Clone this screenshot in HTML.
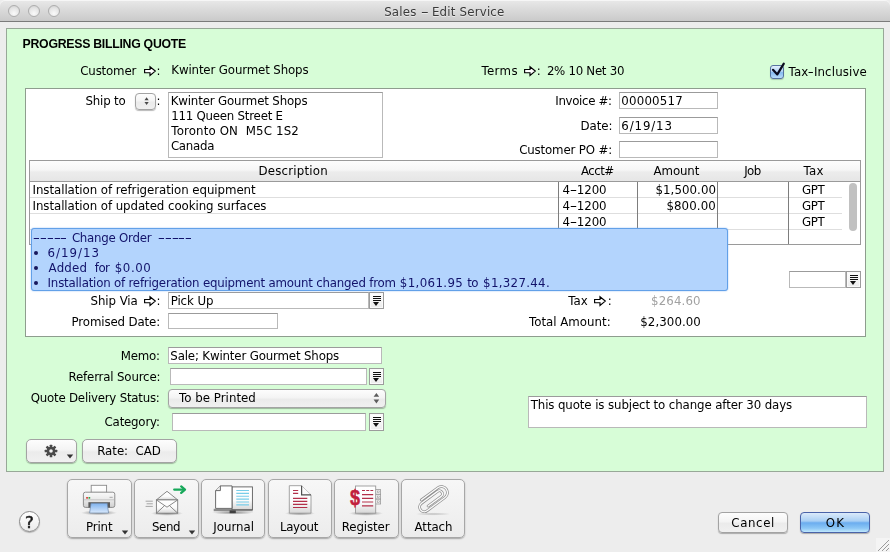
<!DOCTYPE html>
<html><head><meta charset="utf-8"><title>Sales - Edit Service</title>
<style>
*{box-sizing:border-box;margin:0;padding:0}
html,body{width:890px;height:552px;overflow:hidden}
body{background:#ededed;font-family:"DejaVu Sans","Liberation Sans",sans-serif;font-size:11.8px;color:#000;position:relative}
.abs,.t,.f,.btn,.tb,svg{position:absolute}
.t{white-space:pre;line-height:16px;height:16px}
.f{background:#fff;border:1px solid #b9b9b9;border-top-color:#9b9b9b}
#titlebar{left:0;top:0;width:890px;height:22px;background:linear-gradient(#e9e9e9,#dcdcdc 40%,#cacaca);border-bottom:1px solid #7b7b7b;border-radius:5px 5px 0 0;box-shadow:inset 0 1px 0 #f6f6f6}
.light{position:absolute;top:5px;width:12px;height:12px;border-radius:50%;background:radial-gradient(circle at 50% 75%,#fafafa,#e6e6e6 55%,#cdcdcd);border:1px solid #adadad}
#green{left:6px;top:28px;width:878px;height:444px;background:#d7fdd7;border:1px solid #98a898}
#white{left:25px;top:88px;width:841px;height:249px;background:#fff;border:1px solid #8e9d8e}
.btn{background:linear-gradient(#fdfdfd,#f4f4f4 45%,#ebebeb 55%,#f0f0f0);border:1px solid #a3a3a3;border-radius:5px;box-shadow:0 1px 1px rgba(0,0,0,.28)}
.tb{background:linear-gradient(#f7f7f7,#ececec);border:1px solid #a7a7a7;border-radius:5px;box-shadow:0 1px 1.5px rgba(0,0,0,.3);height:59px;top:479px}
.combo{position:absolute;width:15px;height:17px;border:1px solid #9c9c9c;background:linear-gradient(#ffffff,#ececec);box-shadow:inset 0 0 0 1px #fafafa}
.combo i{position:absolute;left:2.5px;width:8px;height:1px;background:#111}
.combo b{position:absolute;left:3px;top:9px;width:0;height:0;border-left:3.5px solid transparent;border-right:3.5px solid transparent;border-top:4px solid #111}
.gl{position:absolute;background:#dedede;height:1px}
.vl{position:absolute;background:#7d7d7d;width:1px}
</style></head><body>
<div id="titlebar" class="abs">
  <div class="light" style="left:8px"></div><div class="light" style="left:28px"></div><div class="light" style="left:48px"></div>
</div>
<div id="green" class="abs"></div>
<div id="white" class="abs"></div>

<!-- link arrows -->
<svg style="left:143px;top:64.5px" width="14" height="12" viewBox="0 0 14 12"><path d="M1.6 4.5H7V1.7L12.3 6.1 7 10.5V7.7H1.6z" fill="#fff" stroke="#000" stroke-width="1.15" stroke-linejoin="miter"/></svg>
<svg style="left:522.6px;top:64.5px" width="14" height="12" viewBox="0 0 14 12"><path d="M1.6 4.5H7V1.7L12.3 6.1 7 10.5V7.7H1.6z" fill="#fff" stroke="#000" stroke-width="1.15" stroke-linejoin="miter"/></svg>
<svg style="left:143px;top:294.5px" width="14" height="12" viewBox="0 0 14 12"><path d="M1.6 4.5H7V1.7L12.3 6.1 7 10.5V7.7H1.6z" fill="#fff" stroke="#000" stroke-width="1.15" stroke-linejoin="miter"/></svg>
<svg style="left:593.2px;top:294.5px" width="14" height="12" viewBox="0 0 14 12"><path d="M1.6 4.5H7V1.7L12.3 6.1 7 10.5V7.7H1.6z" fill="#fff" stroke="#000" stroke-width="1.15" stroke-linejoin="miter"/></svg>

<!-- checkbox -->
<div class="abs" style="left:770px;top:65px;width:14px;height:14px;border:1px solid #56739f;border-radius:3px;background:linear-gradient(#e3f0fc,#b5d5f6 45%,#86bbf0 55%,#b9dcfa);box-shadow:0 1px 1px rgba(0,0,0,.2)"></div>
<svg style="left:769px;top:60px" width="18" height="20" viewBox="0 0 18 20"><path d="M4 9.8l4.3 4.6L14.8 3.6" fill="none" stroke="#0b0b1e" stroke-width="2.2" stroke-linecap="round" stroke-linejoin="round"/></svg>

<!-- ship to -->
<div class="btn" style="left:134.5px;top:92.5px;width:21px;height:17px;border-radius:4px"></div>
<svg style="left:134px;top:93px" width="22" height="17" viewBox="0 0 22 17"><path d="M10.5 7.2l2.1-2.9 2.1 2.9zM10.5 9l2.1 2.9 2.1-2.9z" fill="#4a4a4a"/></svg>
<div class="f" style="left:168px;top:92px;width:215px;height:66px"></div>
<div class="f" style="left:619px;top:92px;width:99px;height:17px"></div>
<div class="f" style="left:619px;top:117px;width:99px;height:17px"></div>
<div class="f" style="left:619px;top:141px;width:99px;height:17px"></div>

<!-- table -->
<div class="abs" style="left:29px;top:160px;width:832px;height:85px;border:1px solid #9a9a9a;background:#fff"></div>
<div class="abs" style="left:30px;top:161px;width:830px;height:21px;background:linear-gradient(#fdfdfd,#f6f6f6 45%,#ececec 55%,#e6e6e6);border-bottom:1px solid #9a9a9a"></div>
<div class="gl" style="left:30px;top:197px;width:812px"></div>
<div class="gl" style="left:30px;top:213px;width:812px"></div>
<div class="gl" style="left:30px;top:229px;width:812px"></div>
<div class="vl" style="left:558px;top:182px;height:62px"></div>
<div class="vl" style="left:637px;top:182px;height:62px"></div>
<div class="vl" style="left:717px;top:182px;height:62px"></div>
<div class="vl" style="left:788px;top:182px;height:62px"></div>
<div class="abs" style="left:849px;top:183px;width:8px;height:48px;border-radius:4px;background:#c1c1c1"></div>

<div class="f" style="left:789px;top:271px;width:57px;height:17px"></div>
<div class="combo" style="left:846px;top:271px"><i style="top:3px"></i><i style="top:5px"></i><i style="top:7px"></i><b></b></div>

<div class="f" style="left:168px;top:292px;width:201px;height:17px"></div>
<div class="combo" style="left:369px;top:292px"><i style="top:3px"></i><i style="top:5px"></i><i style="top:7px"></i><b></b></div>
<div class="f" style="left:168px;top:313px;width:110px;height:16px"></div>

<!-- change-order popup -->
<div class="abs" style="left:31px;top:228px;width:697px;height:63px;background:#b3d4fd;border:1.5px solid #62a0e8;border-radius:3px;box-shadow:0 0 1.5px #7aaeee"></div>
<div class="abs" style="left:34px;top:251px;width:4px;height:4px;border-radius:50%;background:#17175c"></div>
<div class="abs" style="left:34px;top:266px;width:4px;height:4px;border-radius:50%;background:#17175c"></div>
<div class="abs" style="left:34px;top:281px;width:4px;height:4px;border-radius:50%;background:#17175c"></div>

<!-- lower form -->
<div class="f" style="left:168px;top:347px;width:214px;height:17px"></div>
<div class="f" style="left:170px;top:368px;width:197px;height:17px"></div>
<div class="combo" style="left:369px;top:368px"><i style="top:3px"></i><i style="top:5px"></i><i style="top:7px"></i><b></b></div>
<div class="btn" style="left:168px;top:389px;width:218px;height:19px;border-radius:4px"></div>
<svg style="left:371px;top:391px" width="12" height="14" viewBox="0 0 12 14"><path d="M2.6 5.8L5.4 2l2.8 3.8zM2.6 8.6L5.4 12.4l2.8-3.8z" fill="#5c5c5c"/></svg>
<div class="f" style="left:172px;top:413px;width:194px;height:18px"></div>
<div class="combo" style="left:369px;top:413px;height:18px"><i style="top:3px"></i><i style="top:5px"></i><i style="top:7px"></i><b></b></div>
<div class="f" style="left:528px;top:396px;width:339px;height:32px"></div>

<!-- gear + rate -->
<div class="btn" style="left:26px;top:439px;width:51px;height:24px"></div>
<svg style="left:44px;top:444px" width="14" height="14" viewBox="-7 -7 14 14"><g fill="#4a4a4a"><circle r="4.3"/><g id="teeth"><rect x="-1.3" y="-6.3" width="2.6" height="12.6" rx=".5"/><rect x="-1.3" y="-6.3" width="2.6" height="12.6" rx=".5" transform="rotate(45)"/><rect x="-1.3" y="-6.3" width="2.6" height="12.6" rx=".5" transform="rotate(90)"/><rect x="-1.3" y="-6.3" width="2.6" height="12.6" rx=".5" transform="rotate(135)"/></g></g><circle r="1.8" fill="#f3f3f3"/></svg>
<svg style="left:65.6px;top:454px" width="8" height="5" viewBox="0 0 8 5"><path d="M.8.5h6.4L4 4.4z" fill="#333"/></svg>
<div class="btn" style="left:82px;top:439px;width:95px;height:24px"></div>

<!-- toolbar -->
<div class="tb" style="left:67px;width:65px"></div>
<div class="tb" style="left:134px;width:65px"></div>
<div class="tb" style="left:201px;width:64px"></div>
<div class="tb" style="left:268px;width:64px"></div>
<div class="tb" style="left:334px;width:65px"></div>
<div class="tb" style="left:401px;width:64px"></div>
<svg style="left:121px;top:530px" width="8" height="5" viewBox="0 0 8 5"><path d="M.8.5h6.4L4 4.4z" fill="#333"/></svg>
<svg style="left:188px;top:530px" width="8" height="5" viewBox="0 0 8 5"><path d="M.8.5h6.4L4 4.4z" fill="#333"/></svg>
<svg style="left:0;top:0" width="890" height="552" viewBox="0 0 890 552">
<defs>
<linearGradient id="gPaper" x1="0" y1="0" x2="0" y2="1"><stop offset="0" stop-color="#ffffff"/><stop offset=".6" stop-color="#fbfbfb"/><stop offset="1" stop-color="#d6d6d6"/></linearGradient>
<linearGradient id="gBody" x1="0" y1="0" x2="0" y2="1"><stop offset="0" stop-color="#fafafa"/><stop offset=".5" stop-color="#e9e9e9"/><stop offset="1" stop-color="#cfcfcf"/></linearGradient>
<linearGradient id="gBlue" x1="0" y1="0" x2="0" y2="1"><stop offset="0" stop-color="#7fb2ee"/><stop offset="1" stop-color="#d9e9fc"/></linearGradient>
<radialGradient id="gSh"><stop offset="0" stop-color="#000" stop-opacity=".42"/><stop offset=".6" stop-color="#000" stop-opacity=".18"/><stop offset="1" stop-color="#000" stop-opacity="0"/></radialGradient>
</defs>
<!-- printer -->
<ellipse cx="99" cy="512.8" rx="18" ry="2.6" fill="url(#gSh)"/>
<rect x="91.2" y="485.3" width="15.4" height="9" fill="url(#gPaper)" stroke="#8a8a8a" stroke-width=".9"/>
<rect x="83.4" y="492.2" width="31.4" height="15.2" rx="2" fill="url(#gBody)" stroke="#828282" stroke-width=".9"/>
<path d="M84 499.8H114.2" stroke="#bcbcbc" stroke-width=".8"/>
<rect x="86.2" y="497" width="1.7" height="1.7" fill="#d9392f"/><rect x="88.5" y="497" width="1.7" height="1.7" fill="#35a845"/>
<rect x="109.5" y="496.8" width="3.2" height="1.2" fill="#b5b5b5"/>
<rect x="88.4" y="502.2" width="21.6" height="5.4" fill="#5b5b5b"/>
<path d="M91 503.3H107.2L108.6 513H89.6z" fill="url(#gBlue)" stroke="#6f86a6" stroke-width=".7"/>
<!-- envelope -->
<ellipse cx="167" cy="513.4" rx="16" ry="2.4" fill="url(#gSh)"/>
<path d="M145.6 501.2H152.8M146.6 503.8H152.8M145.6 506.4H152.8" stroke="#9c9c9c" stroke-width=".9"/>
<path d="M156.4 499.9L167 491.3 177.7 499.9z" fill="url(#gPaper)" stroke="#7c7c7c" stroke-width=".9" stroke-linejoin="round"/>
<rect x="156.4" y="499.9" width="21.3" height="13.3" fill="url(#gPaper)" stroke="#7c7c7c" stroke-width=".9"/>
<path d="M156.4 499.9L167 507.2 177.7 499.9M156.4 513.2L164.6 505.6M177.7 513.2L169.4 505.6" fill="none" stroke="#7c7c7c" stroke-width=".9"/>
<path d="M174.2 489.6H184" stroke="#17a85a" stroke-width="2.3" stroke-linecap="round"/>
<path d="M181.2 486.4L185 489.6 181.2 492.9" fill="none" stroke="#17a85a" stroke-width="2.3" stroke-linecap="round" stroke-linejoin="round"/>
<!-- journal -->
<ellipse cx="233" cy="512.6" rx="21" ry="2" fill="url(#gSh)"/>
<rect x="213.7" y="508.8" width="38.9" height="2.4" fill="#8c8c8c"/>
<rect x="229.6" y="510.4" width="6.2" height="2.8" fill="#3f3f3f"/>
<rect x="232" y="486.9" width="20.4" height="22.8" fill="url(#gPaper)" stroke="#5c5c5c" stroke-width=".9"/>
<path d="M215.6 490.6L220.4 485.9H232V508.4H215.6z" fill="#fff" stroke="#5c5c5c" stroke-width=".9" stroke-linejoin="round"/>
<path d="M215.6 490.6H220.4V485.9" fill="#ececec" stroke="#5c5c5c" stroke-width=".9" stroke-linejoin="round"/>
<path d="M236.3 490.5H249M236.3 493.4H249M236.3 496.2H249M236.3 499.1H249M236.3 502H249M236.3 504.9H249" stroke="#78cde9" stroke-width="1.1"/>
<!-- layout -->
<ellipse cx="300" cy="513.4" rx="15" ry="2.2" fill="url(#gSh)"/>
<path d="M289.3 485.7H301.6L311 494.9V513.2H289.3z" fill="url(#gPaper)" stroke="#9a9a9a" stroke-width=".9" stroke-linejoin="round"/>
<path d="M301.6 485.7V494.9H311" fill="#fafafa" stroke="#505050" stroke-width="1.2"/>
<path d="M293 490.5H298.2M293 493.4H298.2M293 498.3H307.3M293 501.4H307.3M293 504.4H307.3M293 507.5H307.3" stroke="#b3304a" stroke-width="1.2"/>
<!-- register -->
<ellipse cx="366" cy="513.4" rx="17" ry="2.4" fill="url(#gSh)"/>
<g fill="#f3f3f3" stroke="#9a9a9a" stroke-width=".8"><rect x="375.2" y="489.6" width="5.4" height="4.6"/><rect x="375.2" y="494.4" width="5.4" height="4.6"/><rect x="375.2" y="499.2" width="5.4" height="4.8"/></g>
<g fill="#fff" stroke="#8a8a8a" stroke-width=".5"><rect x="377.6" y="491" width="1.6" height="1.6"/><rect x="377.6" y="496" width="1.6" height="1.6"/><rect x="377.6" y="500.9" width="1.6" height="1.6"/></g>
<rect x="355.5" y="486" width="20.2" height="27.2" fill="url(#gPaper)" stroke="#9a9a9a" stroke-width=".9"/>
<path d="M362 490.5H373.2" stroke="#b3304a" stroke-width="1.2" stroke-dasharray="3 1.2"/>
<path d="M362 494.6H373.2M362 498.3H373.2M362 502H373.2M362 505.8H373.2" stroke="#b3304a" stroke-width="1.2"/>
<text x="0" y="0" transform="translate(349.9,505) scale(.84,1)" font-family="Liberation Sans, DejaVu Sans, sans-serif" font-weight="bold" font-size="21.5" fill="#c21f3d" stroke="#c21f3d" stroke-width=".5">$</text>
<!-- paperclip -->
<ellipse cx="433" cy="514" rx="18" ry="1.6" fill="url(#gSh)" opacity=".5"/>
<g transform="translate(432.8,499) rotate(-36.5) scale(.93) translate(-19.5,-6.5)" fill="none" stroke-linecap="round" stroke-linejoin="round">
<path id="clip" d="M11 9.6H28.5A3.3 3.3 0 0 0 28.5 3H7A5 5 0 0 0 7 13H31A6.5 6.5 0 0 0 31 0H9" stroke="#8e8e8e" stroke-width="3"/>
<path d="M11 9.6H28.5A3.3 3.3 0 0 0 28.5 3H7A5 5 0 0 0 7 13H31A6.5 6.5 0 0 0 31 0H9" stroke="#fbfbfb" stroke-width="1.5"/>
</g>
</svg>


<!-- help -->
<div class="abs" style="left:19px;top:511px;width:21px;height:21px;border-radius:50%;border:1px solid #8a8a8a;background:linear-gradient(#ffffff,#ebebeb);box-shadow:0 1px 1px rgba(0,0,0,.25)"></div>

<!-- cancel / ok -->
<div class="btn" style="left:718px;top:512px;width:70px;height:21px;border-radius:4px"></div>
<div class="btn" style="left:800px;top:512px;width:70px;height:21px;border-radius:4px;border-color:#4a63a8;background:linear-gradient(#dbeafa,#a9cff4 42%,#6badef 52%,#8cc7f6 80%,#c0e7fc)"></div>
<!-- resize grip -->
<svg style="left:876px;top:538px" width="14" height="14" viewBox="0 0 14 14"><rect width="14" height="14" fill="#f4f4f4"/><path d="M13 2L2 13M13 6L6 13M13 10l-3 3" stroke="#9a9a9a" stroke-width="1"/></svg>

<div class="abs" style="left:0;top:0;width:890px;height:552px;will-change:transform">
<div class="t" style="left:384.20px;top:4.00px;letter-spacing:0.194px;color:#3a3a3a;text-shadow:0 1px 0 rgba(255,255,255,.55)">Sales <span style="display:inline-block;width:7.5px;text-align:center;letter-spacing:0;transform:scaleX(1.9)">-</span> Edit Service</div>
<div class="t" style="left:22.60px;top:36.00px;letter-spacing:-0.276px;font-weight:bold;font-size:12.3px;font-family:'Liberation Sans',sans-serif">PROGRESS BILLING QUOTE</div>
<div class="t" style="left:80.30px;top:63.00px;letter-spacing:-0.186px">Customer</div>
<div class="t" style="left:156.60px;top:63.00px">:</div>
<div class="t" style="left:171.30px;top:62.00px;letter-spacing:-0.140px">Kwinter Gourmet Shops</div>
<div class="t" style="left:481.50px;top:63.00px;letter-spacing:0.325px">Terms</div>
<div class="t" style="left:536.80px;top:63.00px">:</div>
<div class="t" style="left:546.90px;top:63.00px;letter-spacing:-0.291px">2% 10 Net 30</div>
<div class="t" style="left:788.50px;top:64.20px;letter-spacing:0.136px">Tax<span style="display:inline-block;width:5.5px;text-align:center;letter-spacing:0;transform:scaleX(1.4)">-</span>Inclusive</div>
<div class="t" style="left:85.40px;top:93.00px;letter-spacing:-0.150px">Ship to</div>
<div class="t" style="left:156.60px;top:93.00px">:</div>
<div class="t" style="left:170.70px;top:93.00px;letter-spacing:-0.160px">Kwinter Gourmet Shops</div>
<div class="t" style="left:171.20px;top:108.00px;letter-spacing:-0.235px">111 Queen Street E</div>
<div class="t" style="left:171.30px;top:123.00px;letter-spacing:0.133px">Toronto ON&nbsp; M5C 1S2</div>
<div class="t" style="left:170.90px;top:138.00px;letter-spacing:-0.280px">Canada</div>
<div class="t" style="left:555.30px;top:93.00px;letter-spacing:-0.344px">Invoice #:</div>
<div class="t" style="left:621.30px;top:93.00px;letter-spacing:0.200px">00000517</div>
<div class="t" style="left:580.60px;top:118.00px;letter-spacing:-0.100px">Date:</div>
<div class="t" style="left:621.30px;top:118.00px;letter-spacing:0.867px">6/19/13</div>
<div class="t" style="left:519.20px;top:142.00px;letter-spacing:-0.154px">Customer PO #:</div>
<div class="t" style="left:258.50px;top:163.00px;letter-spacing:0.200px">Description</div>
<div class="t" style="left:580.90px;top:163.00px;letter-spacing:-0.500px">Acct#</div>
<div class="t" style="left:653.60px;top:163.00px;letter-spacing:-0.140px">Amount</div>
<div class="t" style="left:744.15px;top:163.00px;letter-spacing:-0.500px">Job</div>
<div class="t" style="left:803.50px;top:163.00px;letter-spacing:0.300px">Tax</div>
<div class="t" style="left:32.50px;top:182.00px;letter-spacing:-0.058px">Installation of refrigeration equipment</div>
<div class="t" style="left:562.40px;top:182.00px;letter-spacing:-0.075px">4<span style="display:inline-block;width:7px;text-align:center;letter-spacing:0;transform:scaleX(1.75)">-</span>1200</div>
<div class="t" style="left:655.40px;top:182.00px;letter-spacing:0.075px">$1,500.00</div>
<div class="t" style="left:802.10px;top:182.00px;letter-spacing:-0.450px">GPT</div>
<div class="t" style="left:32.50px;top:198.00px;letter-spacing:-0.064px">Installation of updated cooking surfaces</div>
<div class="t" style="left:562.40px;top:198.00px;letter-spacing:-0.075px">4<span style="display:inline-block;width:7px;text-align:center;letter-spacing:0;transform:scaleX(1.75)">-</span>1200</div>
<div class="t" style="left:666.40px;top:198.00px;letter-spacing:0.100px">$800.00</div>
<div class="t" style="left:802.10px;top:198.00px;letter-spacing:-0.450px">GPT</div>
<div class="t" style="left:562.40px;top:214.00px;letter-spacing:-0.075px">4<span style="display:inline-block;width:7px;text-align:center;letter-spacing:0;transform:scaleX(1.75)">-</span>1200</div>
<div class="t" style="left:802.10px;top:214.00px;letter-spacing:-0.450px">GPT</div>
<div class="t" style="left:33.40px;top:229.50px;color:#12126a"><span style="display:inline-block;width:6.75px;text-align:center;letter-spacing:0;transform:scaleX(1.7)">-</span><span style="display:inline-block;width:6.75px;text-align:center;letter-spacing:0;transform:scaleX(1.7)">-</span><span style="display:inline-block;width:6.75px;text-align:center;letter-spacing:0;transform:scaleX(1.7)">-</span><span style="display:inline-block;width:6.75px;text-align:center;letter-spacing:0;transform:scaleX(1.7)">-</span><span style="display:inline-block;width:6.75px;text-align:center;letter-spacing:0;transform:scaleX(1.7)">-</span></div>
<div class="t" style="left:71.90px;top:229.50px;letter-spacing:-0.255px;color:#12126a">Change Order</div>
<div class="t" style="left:158.10px;top:229.50px;color:#12126a"><span style="display:inline-block;width:6.75px;text-align:center;letter-spacing:0;transform:scaleX(1.7)">-</span><span style="display:inline-block;width:6.75px;text-align:center;letter-spacing:0;transform:scaleX(1.7)">-</span><span style="display:inline-block;width:6.75px;text-align:center;letter-spacing:0;transform:scaleX(1.7)">-</span><span style="display:inline-block;width:6.75px;text-align:center;letter-spacing:0;transform:scaleX(1.7)">-</span><span style="display:inline-block;width:6.75px;text-align:center;letter-spacing:0;transform:scaleX(1.7)">-</span></div>
<div class="t" style="left:47.60px;top:244.50px;letter-spacing:0.983px;color:#12126a">6/19/13</div>
<div class="t" style="left:48.60px;top:259.50px;letter-spacing:0.200px;color:#12126a">Added</div>
<div class="t" style="left:94.75px;top:259.50px;letter-spacing:-0.500px;color:#12126a">for</div>
<div class="t" style="left:114.70px;top:259.50px;letter-spacing:0.600px;color:#12126a">$0.00</div>
<div class="t" style="left:47.60px;top:274.50px;letter-spacing:-0.207px;color:#12126a">Installation of refrigeration equipment amount changed from</div>
<div class="t" style="left:399.80px;top:274.50px;letter-spacing:0.375px;color:#12126a">$1,061.95</div>
<div class="t" style="left:467.15px;top:274.50px;letter-spacing:-0.500px;color:#12126a">to</div>
<div class="t" style="left:483.10px;top:274.50px;letter-spacing:0.311px;color:#12126a">$1,327.44.</div>
<div class="t" style="left:90.50px;top:293.00px;letter-spacing:-0.071px">Ship Via</div>
<div class="t" style="left:156.60px;top:293.00px">:</div>
<div class="t" style="left:170.70px;top:293.00px;letter-spacing:-0.100px">Pick Up</div>
<div class="t" style="left:71.60px;top:314.00px;letter-spacing:-0.131px">Promised Date:</div>
<div class="t" style="left:568.20px;top:293.00px;letter-spacing:0.100px">Tax</div>
<div class="t" style="left:607.80px;top:293.00px">:</div>
<div class="t" style="left:651.00px;top:293.00px;letter-spacing:0.133px;color:#a2a2a2">$264.60</div>
<div class="t" style="left:529.00px;top:313.60px">Total Amount:</div>
<div class="t" style="left:640.30px;top:313.60px;letter-spacing:0.062px">$2,300.00</div>
<div class="t" style="left:120.80px;top:348.30px;letter-spacing:-0.225px">Memo:</div>
<div class="t" style="left:170.30px;top:348.30px;letter-spacing:-0.158px">Sale; Kwinter Gourmet Shops</div>
<div class="t" style="left:68.50px;top:368.80px;letter-spacing:-0.173px">Referral Source:</div>
<div class="t" style="left:30.80px;top:389.70px;letter-spacing:-0.233px">Quote Delivery Status:</div>
<div class="t" style="left:179.00px;top:389.70px;letter-spacing:0.025px">To be Printed</div>
<div class="t" style="left:104.60px;top:414.00px;letter-spacing:-0.212px">Category:</div>
<div class="t" style="left:530.70px;top:396.50px;letter-spacing:-0.111px">This quote is subject to change after 30 days</div>
<div class="t" style="left:97.20px;top:442.70px;letter-spacing:-0.033px">Rate:&nbsp; CAD</div>
<div class="t" style="left:85.90px;top:518.70px;letter-spacing:-0.100px">Print</div>
<div class="t" style="left:151.90px;top:518.70px;letter-spacing:-0.333px">Send</div>
<div class="t" style="left:213.30px;top:518.70px;letter-spacing:-0.017px">Journal</div>
<div class="t" style="left:279.90px;top:518.70px;letter-spacing:-0.320px">Layout</div>
<div class="t" style="left:341.80px;top:518.70px;letter-spacing:-0.114px">Register</div>
<div class="t" style="left:414.60px;top:518.70px;letter-spacing:-0.100px">Attach</div>
<div class="t" style="left:731.30px;top:514.80px;letter-spacing:0.620px">Cancel</div>
<div class="t" style="left:825.65px;top:514.80px;letter-spacing:1.200px">OK</div>
<div class="t" style="left:25.00px;top:514.50px;color:#1a1a1a;font-size:16.6px;-webkit-text-stroke:.55px #1a1a1a">?</div>
</div>
</body></html>
